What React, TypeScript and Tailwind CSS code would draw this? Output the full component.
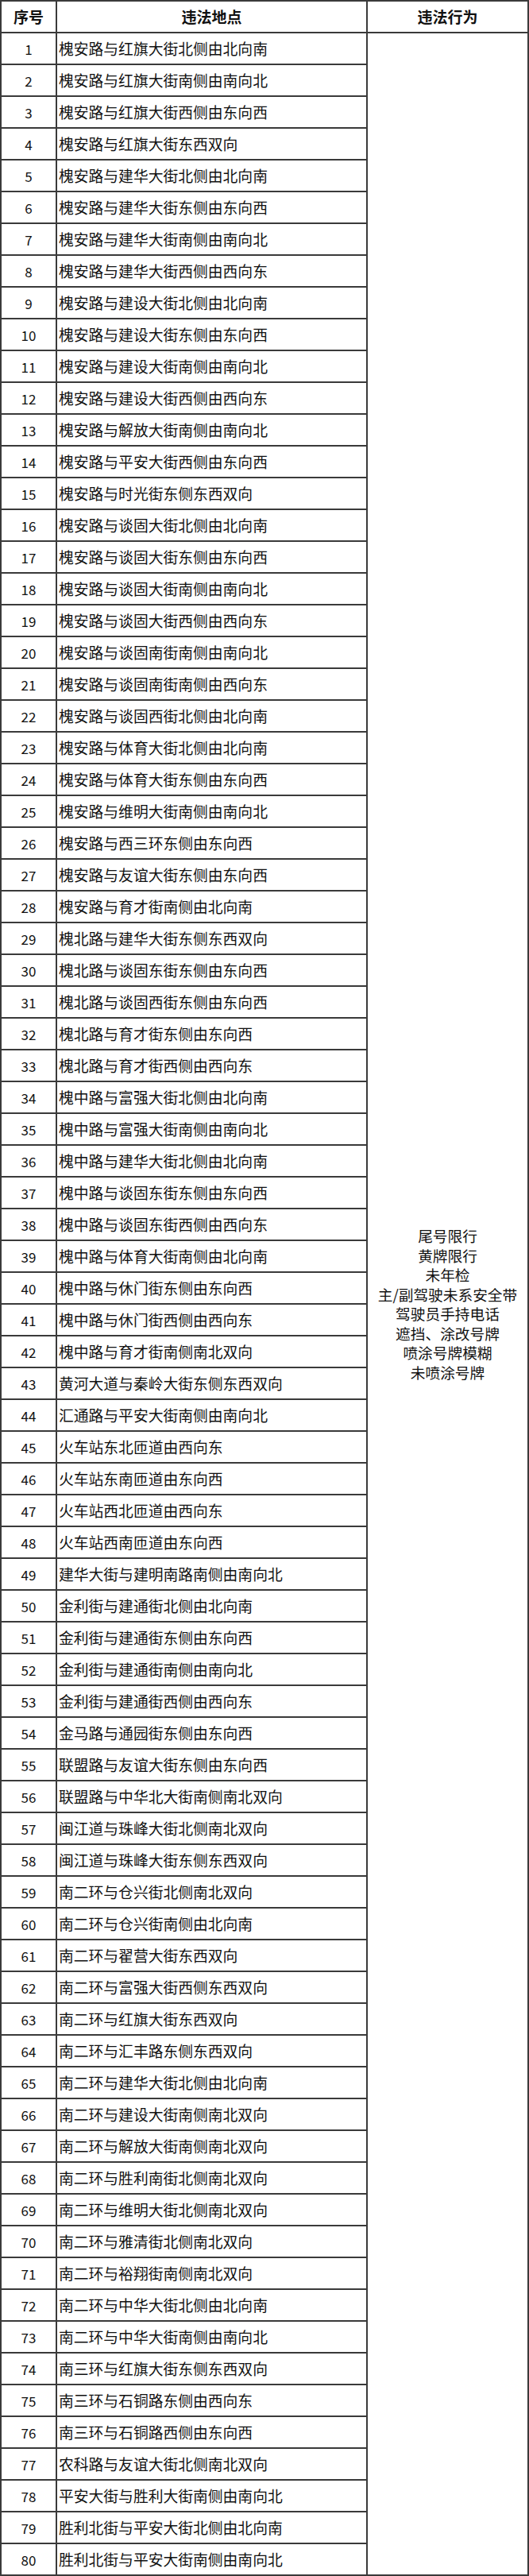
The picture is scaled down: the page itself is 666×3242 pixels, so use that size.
const places = [
  '槐安路与红旗大街北侧由北向南',
  '槐安路与红旗大街南侧由南向北',
  '槐安路与红旗大街西侧由东向西',
  '槐安路与红旗大街东西双向',
  '槐安路与建华大街北侧由北向南',
  '槐安路与建华大街东侧由东向西',
  '槐安路与建华大街南侧由南向北',
  '槐安路与建华大街西侧由西向东',
  '槐安路与建设大街北侧由北向南',
  '槐安路与建设大街东侧由东向西',
  '槐安路与建设大街南侧由南向北',
  '槐安路与建设大街西侧由西向东',
  '槐安路与解放大街南侧由南向北',
  '槐安路与平安大街西侧由东向西',
  '槐安路与时光街东侧东西双向',
  '槐安路与谈固大街北侧由北向南',
  '槐安路与谈固大街东侧由东向西',
  '槐安路与谈固大街南侧由南向北',
  '槐安路与谈固大街西侧由西向东',
  '槐安路与谈固南街南侧由南向北',
  '槐安路与谈固南街南侧由西向东',
  '槐安路与谈固西街北侧由北向南',
  '槐安路与体育大街北侧由北向南',
  '槐安路与体育大街东侧由东向西',
  '槐安路与维明大街南侧由南向北',
  '槐安路与西三环东侧由东向西',
  '槐安路与友谊大街东侧由东向西',
  '槐安路与育才街南侧由北向南',
  '槐北路与建华大街东侧东西双向',
  '槐北路与谈固东街东侧由东向西',
  '槐北路与谈固西街东侧由东向西',
  '槐北路与育才街东侧由东向西',
  '槐北路与育才街西侧由西向东',
  '槐中路与富强大街北侧由北向南',
  '槐中路与富强大街南侧由南向北',
  '槐中路与建华大街北侧由北向南',
  '槐中路与谈固东街东侧由东向西',
  '槐中路与谈固东街西侧由西向东',
  '槐中路与体育大街南侧由北向南',
  '槐中路与休门街东侧由东向西',
  '槐中路与休门街西侧由西向东',
  '槐中路与育才街南侧南北双向',
  '黄河大道与秦岭大街东侧东西双向',
  '汇通路与平安大街南侧由南向北',
  '火车站东北匝道由西向东',
  '火车站东南匝道由东向西',
  '火车站西北匝道由西向东',
  '火车站西南匝道由东向西',
  '建华大街与建明南路南侧由南向北',
  '金利街与建通街北侧由北向南',
  '金利街与建通街东侧由东向西',
  '金利街与建通街南侧由南向北',
  '金利街与建通街西侧由西向东',
  '金马路与通园街东侧由东向西',
  '联盟路与友谊大街东侧由东向西',
  '联盟路与中华北大街南侧南北双向',
  '闽江道与珠峰大街北侧南北双向',
  '闽江道与珠峰大街东侧东西双向',
  '南二环与仓兴街北侧南北双向',
  '南二环与仓兴街南侧由北向南',
  '南二环与翟营大街东西双向',
  '南二环与富强大街西侧东西双向',
  '南二环与红旗大街东西双向',
  '南二环与汇丰路东侧东西双向',
  '南二环与建华大街北侧由北向南',
  '南二环与建设大街南侧南北双向',
  '南二环与解放大街南侧南北双向',
  '南二环与胜利南街北侧南北双向',
  '南二环与维明大街北侧南北双向',
  '南二环与雅清街北侧南北双向',
  '南二环与裕翔街南侧南北双向',
  '南二环与中华大街北侧由北向南',
  '南二环与中华大街南侧由南向北',
  '南三环与红旗大街东侧东西双向',
  '南三环与石铜路东侧由西向东',
  '南三环与石铜路西侧由东向西',
  '农科路与友谊大街北侧南北双向',
  '平安大街与胜利大街南侧由南向北',
  '胜利北街与平安大街北侧由北向南',
  '胜利北街与平安大街南侧由南向北',
];

const offences = [
  '尾号限行',
  '黄牌限行',
  '未年检',
  '主/副驾驶未系安全带',
  '驾驶员手持电话',
  '遮挡、涂改号牌',
  '喷涂号牌模糊',
  '未喷涂号牌',
];

export default function App() {
  return (
    <div className="w-[666px] bg-white font-['Noto_Sans_CJK_SC','Noto_Sans',sans-serif] text-[#111]">
      <table className="w-[664px] table-fixed border-collapse">
        <colgroup>
          <col className="w-[70px]" />
          <col className="w-[391px]" />
          <col className="w-[203px]" />
        </colgroup>
        <thead>
          <tr className="h-[40px]">
            <th className="border-2 border-[#3a3a3a] text-center text-[19px] font-bold">序号</th>
            <th className="border-2 border-[#3a3a3a] text-center text-[19px] font-bold">违法地点</th>
            <th className="border-2 border-[#3a3a3a] text-center text-[19px] font-bold">违法行为</th>
          </tr>
        </thead>
        <tbody>
          {places.map((place, i) => (
            <tr key={i} className="h-[40px]">
              <td className="border-2 border-[#3a3a3a] p-0 text-center text-[17px] leading-none">
                {i + 1}
              </td>
              <td className="border-2 border-[#3a3a3a] py-0 pl-[2px] pr-0 text-left text-[18.8px] leading-none whitespace-nowrap">
                {place}
              </td>
              {i === 0 && (
                <td
                  rowSpan={places.length}
                  className="border-2 border-[#3a3a3a] p-0 text-center align-middle text-[18.7px] leading-[24.5px]"
                >
                  {offences.map((o) => (
                    <div key={o}>{o}</div>
                  ))}
                </td>
              )}
            </tr>
          ))}
        </tbody>
      </table>
    </div>
  );
}
